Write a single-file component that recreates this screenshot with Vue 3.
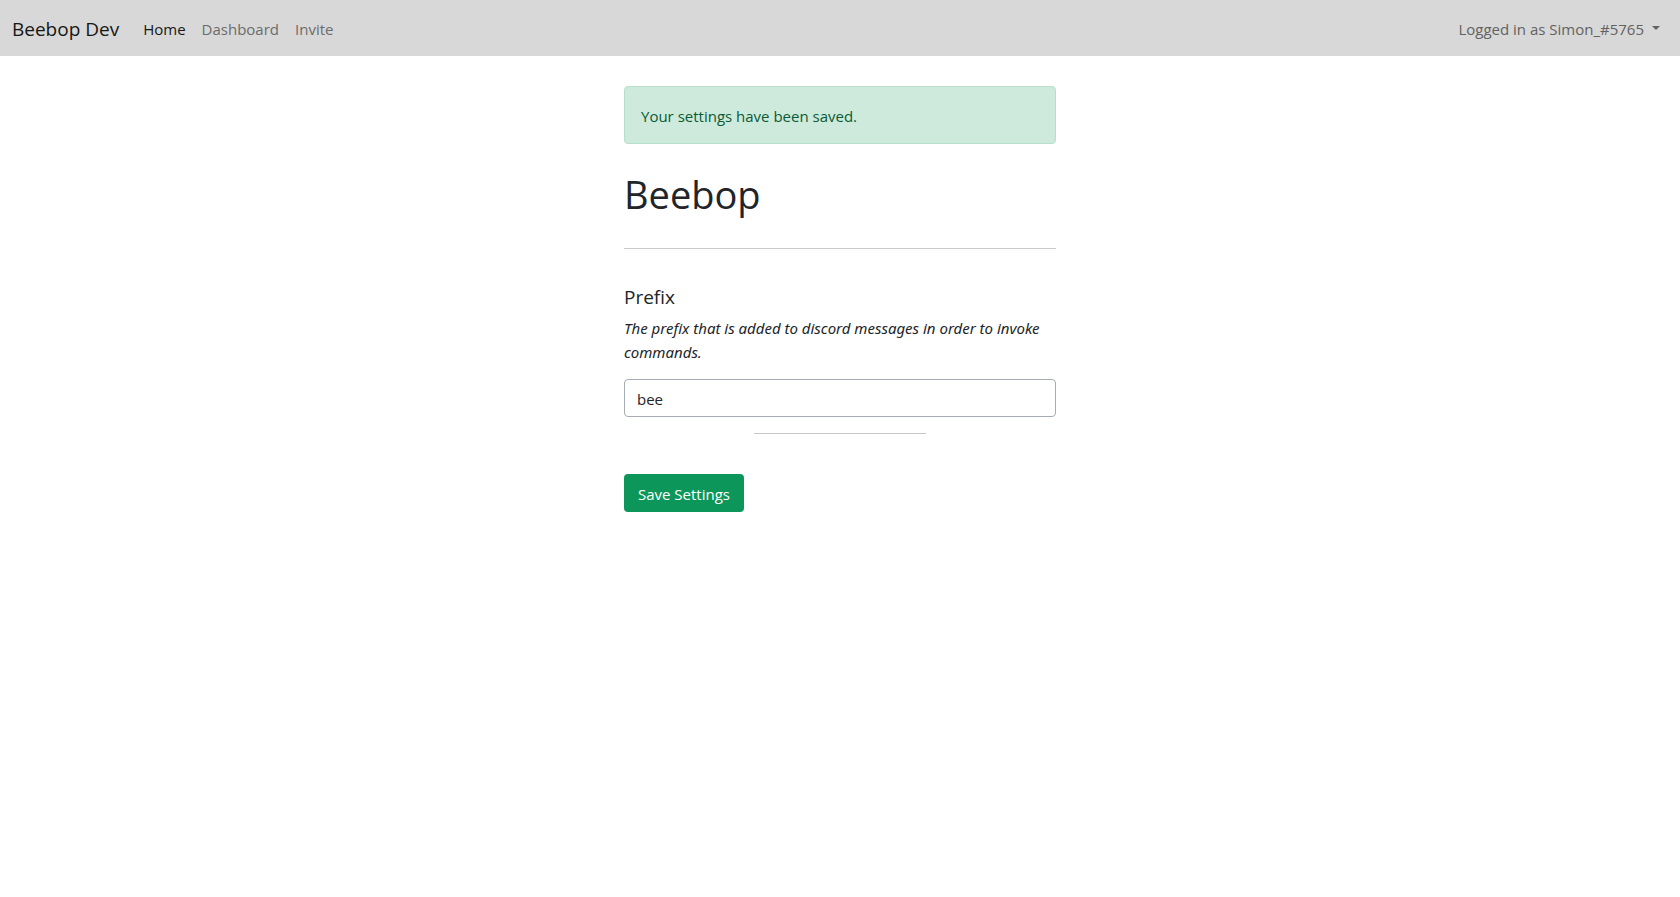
<script setup>
import { ref } from 'vue'

const links = [
  { label: 'Home', active: true },
  { label: 'Dashboard', active: false },
  { label: 'Invite', active: false },
]
const prefix = ref('bee')
</script>

<template>
  <div class="page">
    <header class="navbar">
      <a class="brand" href="#">Beebop Dev</a>
      <nav class="nav">
        <a v-for="link in links" :key="link.label" href="#" class="nav-link" :class="{ active: link.active }">{{ link.label }}</a>
      </nav>
      <button type="button" class="account">Logged in as Simon_#5765<span class="caret"></span></button>
    </header>

    <main class="content">
      <div class="alert" role="alert">Your settings have been saved.</div>
      <h1 class="title">Beebop</h1>
      <hr class="rule" />
      <form @submit.prevent>
        <label class="label" for="prefix">Prefix</label>
        <p id="prefix-help" class="help">The prefix that is added to discord messages in order to invoke commands.</p>
        <input id="prefix" v-model="prefix" class="field" type="text" aria-describedby="prefix-help" />
        <hr class="rule short" />
        <button type="submit" class="save">Save Settings</button>
      </form>
    </main>
  </div>
</template>

<style>
body {
  margin: 0;
  background: #fff;
}
</style>

<style scoped>
.page,
.page * {
  box-sizing: border-box;
}
.page {
  font-family: "Segoe UI", "Open Sans", "Noto Sans", sans-serif;
  font-size: 15px;
  line-height: 24px;
  color: #212529;
}
.navbar {
  display: flex;
  align-items: center;
  min-height: 56px;
  padding: 2px 12px 0;
  background: #d8d8d8;
}
.brand {
  margin-right: 16px;
  font-size: 19px;
  line-height: 30px;
  color: #161616;
  text-decoration: none;
}
.nav {
  display: flex;
  flex: 1;
}
.nav-link {
  padding: 8px;
  color: #6c6c6c;
  text-decoration: none;
}
.nav-link.active {
  color: #161616;
}
.account {
  display: flex;
  align-items: center;
  gap: 8px;
  padding: 8px;
  border: 0;
  background: none;
  font: inherit;
  color: #626262;
}
.caret {
  margin-bottom: 2px;
  border-top: 4px solid;
  border-right: 4px solid transparent;
  border-left: 4px solid transparent;
}
.content {
  width: 100%;
  max-width: 432px;
  margin: 30px auto 0;
}
.alert {
  padding: 17px 16px 15px;
  border: 1px solid #b6dfcb;
  border-radius: 4px;
  background: #ceeadc;
  color: #0a5b35;
}
.title {
  margin: 26px 0 0;
  font-size: 38px;
  font-weight: 400;
  line-height: 48px;
}
.rule {
  height: 1px;
  margin: 30px 0 0;
  border: 0;
  background: #c8c9ca;
}
.label {
  display: block;
  margin-top: 36px;
  font-size: 19px;
  line-height: 24px;
}
.help {
  margin: 7px 0 0;
  font-family: "Segoe UI", "Noto Sans", "Open Sans", sans-serif;
  font-style: italic;
}
.field {
  display: block;
  width: 100%;
  height: 38px;
  margin-top: 15px;
  padding: 7px 12px 5px;
  border: 1px solid #a5acb3;
  border-radius: 4px;
  background: #fff;
  font: inherit;
  color: #212529;
}
.short {
  width: 40%;
  margin: 16px auto 0;
}
.save {
  margin-top: 40px;
  padding: 8px 14px 6px;
  border: 0;
  border-radius: 4px;
  background: #0d9659;
  font: inherit;
  color: #fff;
}
</style>
